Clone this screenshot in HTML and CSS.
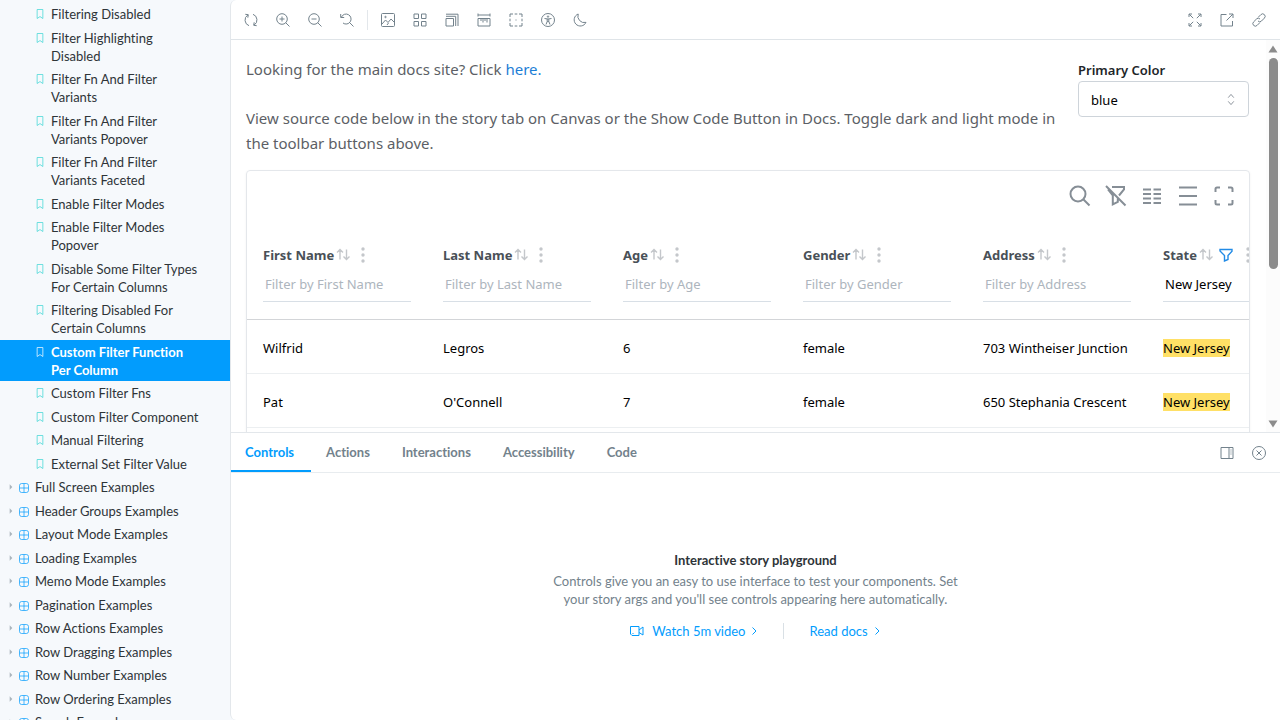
FILE: index.html
```html
<!DOCTYPE html>
<html lang="en">
<head>
<meta charset="utf-8">
<title>Custom Filter Function Per Column - Storybook</title>
<link rel="stylesheet" href="styles.css">
</head>
<body>
<svg class="defs" aria-hidden="true">
  <symbol id="bookmark" viewBox="0 0 14 14"><path d="M3 .7h8v12.600L7 10.600 3 13.300z"/></symbol>
  <symbol id="component" viewBox="0 0 14 14"><rect x=".7" y=".7" width="12.600" height="12.600" rx="3"/><path d="M7 1v12M1 7h12"/></symbol>
  <symbol id="caret" viewBox="0 0 6 8"><path d="M1 0l4 4-4 4z"/></symbol>
  <symbol id="sort" viewBox="0 0 14 14"><path d="M4 11.500V1.500M1 4.500l3-3 3 3M10.500 1.500v10M7.500 8.500l3 3 3-3" stroke-width="1.400"/></symbol>
  <symbol id="dots" viewBox="0 0 4 16"><circle cx="2" cy="2" r="1.700"/><circle cx="2" cy="8" r="1.700"/><circle cx="2" cy="14" r="1.700"/></symbol>
  <symbol id="chevron" viewBox="0 0 8 8"><path d="M2.500 .5L6 4 2.500 7.500"/></symbol>
</svg>
<div class="app">
  <nav class="sidebar" aria-label="Stories">
    <ul class="tree">
      <li><a class="story" href="#"><svg><use href="#bookmark"/></svg><span>Filtering Disabled</span></a></li>
      <li><a class="story" href="#"><svg><use href="#bookmark"/></svg><span>Filter Highlighting Disabled</span></a></li>
      <li><a class="story" href="#"><svg><use href="#bookmark"/></svg><span>Filter Fn And Filter Variants</span></a></li>
      <li><a class="story" href="#"><svg><use href="#bookmark"/></svg><span>Filter Fn And Filter Variants Popover</span></a></li>
      <li><a class="story" href="#"><svg><use href="#bookmark"/></svg><span>Filter Fn And Filter Variants Faceted</span></a></li>
      <li><a class="story" href="#"><svg><use href="#bookmark"/></svg><span>Enable Filter Modes</span></a></li>
      <li><a class="story" href="#"><svg><use href="#bookmark"/></svg><span>Enable Filter Modes Popover</span></a></li>
      <li><a class="story" href="#"><svg><use href="#bookmark"/></svg><span>Disable Some Filter Types For Certain Columns</span></a></li>
      <li><a class="story" href="#"><svg><use href="#bookmark"/></svg><span>Filtering Disabled For Certain Columns</span></a></li>
      <li><a class="story selected" href="#" aria-current="page"><svg><use href="#bookmark"/></svg><span>Custom Filter Function Per Column</span></a></li>
      <li><a class="story" href="#"><svg><use href="#bookmark"/></svg><span>Custom Filter Fns</span></a></li>
      <li><a class="story" href="#"><svg><use href="#bookmark"/></svg><span>Custom Filter Component</span></a></li>
      <li><a class="story" href="#"><svg><use href="#bookmark"/></svg><span>Manual Filtering</span></a></li>
      <li><a class="story" href="#"><svg><use href="#bookmark"/></svg><span>External Set Filter Value</span></a></li>
      <li><button class="group"><svg class="caret"><use href="#caret"/></svg><svg class="comp"><use href="#component"/></svg><span>Full Screen Examples</span></button></li>
      <li><button class="group"><svg class="caret"><use href="#caret"/></svg><svg class="comp"><use href="#component"/></svg><span>Header Groups Examples</span></button></li>
      <li><button class="group"><svg class="caret"><use href="#caret"/></svg><svg class="comp"><use href="#component"/></svg><span>Layout Mode Examples</span></button></li>
      <li><button class="group"><svg class="caret"><use href="#caret"/></svg><svg class="comp"><use href="#component"/></svg><span>Loading Examples</span></button></li>
      <li><button class="group"><svg class="caret"><use href="#caret"/></svg><svg class="comp"><use href="#component"/></svg><span>Memo Mode Examples</span></button></li>
      <li><button class="group"><svg class="caret"><use href="#caret"/></svg><svg class="comp"><use href="#component"/></svg><span>Pagination Examples</span></button></li>
      <li><button class="group"><svg class="caret"><use href="#caret"/></svg><svg class="comp"><use href="#component"/></svg><span>Row Actions Examples</span></button></li>
      <li><button class="group"><svg class="caret"><use href="#caret"/></svg><svg class="comp"><use href="#component"/></svg><span>Row Dragging Examples</span></button></li>
      <li><button class="group"><svg class="caret"><use href="#caret"/></svg><svg class="comp"><use href="#component"/></svg><span>Row Number Examples</span></button></li>
      <li><button class="group"><svg class="caret"><use href="#caret"/></svg><svg class="comp"><use href="#component"/></svg><span>Row Ordering Examples</span></button></li>
      <li><button class="group"><svg class="caret"><use href="#caret"/></svg><svg class="comp"><use href="#component"/></svg><span>Search Examples</span></button></li>
    </ul>
  </nav>

  <main class="main">
    <div class="toolbar">
      <button aria-label="Remount component"><svg viewBox="0 0 14 14"><path d="M5 12.700A6 6 0 0 1 3.800 2M1.300 1.300l3 .4-.5 3M9 1.300A6 6 0 0 1 10.200 12M12.700 12.700l-3-.4.5-3"/></svg></button>
      <button aria-label="Zoom in"><svg viewBox="0 0 14 14"><circle cx="6" cy="6" r="5.300"/><path d="M9.700 9.700l3.800 3.800M6 3.500v5M3.500 6h5"/></svg></button>
      <button aria-label="Zoom out"><svg viewBox="0 0 14 14"><circle cx="6" cy="6" r="5.300"/><path d="M9.700 9.700l3.800 3.800M3.500 6h5"/></svg></button>
      <button aria-label="Reset zoom"><svg viewBox="0 0 14 14"><path d="M1.500 4A5 5 0 1 1 3 10M.7 1v3.500h3.500M9.700 9.700l3.800 3.800"/></svg></button>
      <span class="sep"></span>
      <button aria-label="Change background"><svg viewBox="0 0 14 14"><rect x=".5" y=".5" width="13" height="13" rx="1"/><circle cx="4.500" cy="4" r=".7"/><path d="M1 11l3.500-4L7 9.500 10 6l3.500 3.500M6 12l1.500-2"/></svg></button>
      <button aria-label="Apply grid"><svg viewBox="0 0 14 14"><path d="M1 1h4.500v4.500H1zM8.500 1H13v4.500H8.500zM1 8.500h4.500V13H1zM8.500 8.500H13V13H8.500z"/></svg></button>
      <button aria-label="Change viewport"><svg viewBox="0 0 14 14"><path d="M1 5.500h7.500V13H1zM1 3.300h9.700V13M1 1.200h12V13"/></svg></button>
      <button aria-label="Enable measure"><svg viewBox="0 0 14 14"><path d="M1 2h12M1 .5v3M13 .5v3M1 5.500h12v7.500H1zM4 5.500v2.500M6 5.500v4M8 5.500v2.500M10 5.500v4"/></svg></button>
      <button aria-label="Apply outlines"><svg viewBox="0 0 14 14"><path d="M1 4V1h3M10 1h3v3M13 10v3h-3M4 13H1v-3M5.700 1h2.600M5.700 13h2.600M1 5.700v2.600M13 5.700v2.600M6.500 7h1"/></svg></button>
      <button aria-label="Vision simulator"><svg viewBox="0 0 14 14"><circle cx="7" cy="7" r="6.500"/><circle cx="7" cy="3.600" r=".7"/><path d="M3.500 5.500L7 6l3.500-.5M6.200 6v2.500L5 11.500M7.800 6v2.500L9 11.500M6.200 8.500h1.600"/></svg></button>
      <button aria-label="Dark mode"><svg viewBox="0 0 14 14"><path d="M5.200 1A6.200 6.200 0 1 0 13 9.400 6.500 6.500 0 0 1 5.200 1z"/></svg></button>
      <span class="spring"></span>
      <button aria-label="Go full screen"><svg viewBox="0 0 14 14"><path d="M1 4V1h3M10 1h3v3M13 10v3h-3M4 13H1v-3M1.200 1.200l4 4M12.800 1.200l-4 4M12.800 12.800l-4-4M1.200 12.800l4-4"/></svg></button>
      <button aria-label="Open canvas in new tab"><svg viewBox="0 0 14 14"><path d="M6.500 1.500H1v11.500h11.500V8M9 1h4v4M13 1L6.500 7.500"/></svg></button>
      <button aria-label="Copy canvas link"><svg viewBox="0 0 14 14"><path d="M6.200 4.300l2.700-2.700a2.400 2.400 0 0 1 3.500 3.500L9.500 8a2.400 2.400 0 0 1-3.500 0M7.800 9.700l-2.700 2.700a2.400 2.400 0 0 1-3.500-3.500L4.500 6a2.400 2.400 0 0 1 3.500 0"/></svg></button>
    </div>

    <section class="canvas">
      <div class="preview">
        <div class="intro">
          <div class="copy">
            <p>Looking for the main docs site? Click <a href="#">here.</a></p>
            <p>View source code below in the story tab on Canvas or the Show Code Button in Docs. Toggle dark and light mode in the toolbar buttons above.</p>
          </div>
          <div class="field">
            <label for="color">Primary Color</label>
            <div class="select">
              <select id="color"><option>blue</option></select>
              <svg viewBox="0 0 8 14"><path d="M1 5l3-3.500L7 5M1 9l3 3.500L7 9"/></svg>
            </div>
          </div>
        </div>
        <div class="card">
          <div class="card-tools">
            <button aria-label="Show search"><svg viewBox="0 0 22 22"><circle cx="9" cy="9" r="7.500"/><path d="M14.500 14.500L20.500 20.500"/></svg></button>
            <button aria-label="Hide filters"><svg viewBox="0 0 22 22"><path d="M1 1l19.500 19.500M7 2h12v2.500L14 10.500M12.800 12.800V17l-5 2.500V10.500L3 4.500"/></svg></button>
            <button aria-label="Show columns"><svg viewBox="0 0 22 22"><path d="M2 4.500h8M2 9h8M2 13.500h8M2 18h8M12.500 4.500H20M12.500 9H20M12.500 13.500H20M12.500 18H20"/></svg></button>
            <button aria-label="Toggle density"><svg viewBox="0 0 22 22"><path d="M2 2.500h18M2 11h18M2 19.500h18"/></svg></button>
            <button aria-label="Toggle full screen"><svg viewBox="0 0 22 22"><path d="M2.500 7V4a1.500 1.500 0 0 1 1.500-1.500h3M15 2.500h3A1.500 1.500 0 0 1 19.500 4v3M19.500 15v3a1.500 1.500 0 0 1-1.500 1.500h-3M7 19.500H4A1.500 1.500 0 0 1 2.500 18v-3"/></svg></button>
          </div>
          <div class="table-wrap">
            <table>
              <thead><tr>
                <th><div class="head">First Name<svg class="sort"><use href="#sort"/></svg><svg class="dots"><use href="#dots"/></svg></div><input aria-label="Filter by First Name" placeholder="Filter by First Name"></th>
                <th><div class="head">Last Name<svg class="sort"><use href="#sort"/></svg><svg class="dots"><use href="#dots"/></svg></div><input aria-label="Filter by Last Name" placeholder="Filter by Last Name"></th>
                <th><div class="head">Age<svg class="sort"><use href="#sort"/></svg><svg class="dots"><use href="#dots"/></svg></div><input aria-label="Filter by Age" placeholder="Filter by Age"></th>
                <th><div class="head">Gender<svg class="sort"><use href="#sort"/></svg><svg class="dots"><use href="#dots"/></svg></div><input aria-label="Filter by Gender" placeholder="Filter by Gender"></th>
                <th><div class="head">Address<svg class="sort"><use href="#sort"/></svg><svg class="dots"><use href="#dots"/></svg></div><input aria-label="Filter by Address" placeholder="Filter by Address"></th>
                <th><div class="head">State<svg class="sort"><use href="#sort"/></svg><svg class="funnel" viewBox="0 0 14 14"><path d="M1 1.500h12v1.700L9 7.500v4L5.500 13V7.500L1 3z" stroke-width="1.400"/></svg><svg class="dots"><use href="#dots"/></svg></div><input aria-label="Filter by State" value="New Jersey"></th>
              </tr></thead>
              <tbody>
                <tr><td>Wilfrid</td><td>Legros</td><td>6</td><td>female</td><td>703 Wintheiser Junction</td><td><mark>New Jersey</mark></td></tr>
                <tr><td>Pat</td><td>O'Connell</td><td>7</td><td>female</td><td>650 Stephania Crescent</td><td><mark>New Jersey</mark></td></tr>
                <tr><td></td><td></td><td></td><td></td><td></td><td></td></tr>
              </tbody>
            </table>
          </div>
        </div>
      </div>
      <div class="scrollbar" aria-hidden="true">
        <svg viewBox="0 0 10 8"><path d="M5 0.500L9.500 7.500H.5z"/></svg>
        <div class="track"><div class="thumb"></div></div>
        <svg viewBox="0 0 10 8"><path d="M.5 .5h9L5 7.500z"/></svg>
      </div>
    </section>

    <section class="panel">
      <div class="tabs">
        <button class="tab active">Controls</button>
        <button class="tab">Actions</button>
        <button class="tab">Interactions</button>
        <button class="tab">Accessibility</button>
        <button class="tab">Code</button>
        <span class="spring"></span>
        <button class="icon" aria-label="Change addon orientation"><svg viewBox="0 0 14 14"><path d="M1 1.500h12v11H1zM9 1.500v11M10.500 4h1M10.500 6h1M10.500 8h1"/></svg></button>
        <button class="icon" aria-label="Hide addons"><svg viewBox="0 0 14 14"><circle cx="7" cy="7" r="6.500"/><path d="M4.500 4.500l5 5M9.500 4.500l-5 5"/></svg></button>
      </div>
      <div class="empty">
        <h2>Interactive story playground</h2>
        <p>Controls give you an easy to use interface to test your components. Set your story args and you'll see controls appearing here automatically.</p>
        <div class="links">
          <a href="#"><svg class="video" viewBox="0 0 14 14"><path d="M.5 2.500h8.500v9H2L.5 10zM9 6l4-3v8L9 8.500M2.500 9.500h1"/></svg>Watch 5m video<svg class="chev"><use href="#chevron"/></svg></a>
          <span class="divider"></span>
          <a href="#">Read docs<svg class="chev"><use href="#chevron"/></svg></a>
        </div>
      </div>
    </section>
  </main>
</div>
</body>
</html>
```
FILE: styles.css
```css
* { box-sizing: border-box; }
html, body { height: 100%; margin: 0; }
body { font: 13px/18px Lato, sans-serif; font-variant-ligatures: none; color: #2e3438; background: #f6f9fc; overflow: hidden; }
svg { display: block; flex: none; fill: none; stroke: currentColor; }
button { display: flex; align-items: center; padding: 0; border: 0; background: none; font: inherit; font-variant-ligatures: none; color: inherit; }
a { color: inherit; text-decoration: none; }
.defs { position: absolute; width: 0; height: 0; }
.app { display: grid; grid-template-columns: 230px 1fr; height: 100vh; }
.spring { flex: 1; }

/* Sidebar */
.sidebar { overflow: hidden; height: 100vh; }
.tree { display: flex; flex-direction: column; justify-content: space-between; height: calc(100% + 13px); margin: 0; padding: 2px 0 0; list-style: none; }
.story { display: flex; gap: 6px; padding: 3px 27px 2px 35px; }
.story svg { width: 10px; height: 10px; margin-top: 4px; color: #37d5d3; }
.selected { background: #029cfd; color: #fff; font-weight: 700; }
.selected svg { color: #fff; }
.group { gap: 6px; width: 100%; padding: 3px 0 2px 9px; text-align: left; }
.group .caret { width: 4px; height: 6px; fill: #a9b4bc; stroke: none; }
.group .comp { width: 10px; height: 10px; margin-top: 2px; color: #029cfd; }

/* Main column */
.main { display: grid; grid-template-rows: 40px 1fr 288px; min-width: 0; height: 100vh; background: #fff; border-left: 1px solid #e3e7eb; border-radius: 6px 0 0 6px; overflow: hidden; }
.toolbar { display: flex; align-items: center; padding: 0 7px 0 6px; gap: 4px; border-bottom: 1px solid #dfe4e8; color: #73828c; }
.toolbar button, .icon { justify-content: center; width: 28px; height: 28px; }
.toolbar svg, .icon svg { width: 14px; height: 14px; }
.sep { width: 1px; height: 20px; margin: 0 2px; background: #e3e7eb; }

/* Story preview */
.canvas { display: flex; min-height: 0; overflow: hidden; font-family: "Noto Sans", sans-serif; }
.preview { flex: 1; min-width: 0; padding: 17px 16px 0 15px; }
.intro { display: flex; gap: 8px; margin-bottom: 14px; padding-right: 1px; }
.copy { flex: 1; color: #5c5f66; font-size: 15px; line-height: 25px; }
.copy p { margin: 0 0 24px; }
.copy p:last-child { margin: 0; }
.copy a { color: #1c7ed6; }
.field { width: 171px; padding-top: 4px; }
.field label { display: block; height: 20px; color: #212529; font-weight: 600; }
.select { display: flex; align-items: center; height: 36px; padding-right: 13px; border: 1px solid #ced4da; border-radius: 4px; }
.select select { flex: 1; height: 34px; padding: 2px 0 0 12px; border: 0; background: none; appearance: none; font: inherit; color: #000; }
.select svg { width: 8px; height: 13px; color: #868e96; }
.card { border: 1px solid #e4e7eb; border-radius: 4px; box-shadow: 0 1px 3px #0000000d; overflow: hidden; }
.card-tools { display: flex; justify-content: flex-end; align-items: center; gap: 8px; height: 50px; padding: 0 11px; color: #868e96; }
.card-tools button { justify-content: center; width: 28px; height: 28px; }
.card-tools svg { width: 22px; height: 22px; stroke-width: 2; }
.table-wrap { overflow: hidden; }
table { width: 1080px; table-layout: fixed; border-collapse: separate; border-spacing: 0; text-align: left; }
th { padding: 24px 16px 17px; color: #495057; font-weight: 700; border-bottom: 1px solid #d3d5d8; }
.head { display: flex; align-items: center; height: 20px; white-space: nowrap; }
.sort { width: 14px; height: 14px; margin: 0 11px 0 2px; color: #c4c7cb; }
.dots { width: 4px; height: 16px; fill: #c4c7cb; stroke: none; }
.funnel { width: 14px; height: 14px; margin: 0 13px 0 -5px; color: #228be6; }
th input { display: block; width: 100%; height: 37px; padding: 2px 2px 0; border: 0; border-bottom: 1px solid #d8dfe6; background: none; font: inherit; font-weight: 400; color: #000; }
th input::placeholder { color: #adb5bd; opacity: 1; }
td { height: 54px; padding: 3px 16px 0; border-bottom: 1px solid #eceff1; color: #000; white-space: nowrap; }
mark { background: #ffe066; color: inherit; }

.scrollbar { display: flex; flex-direction: column; align-items: center; gap: 5px; width: 14px; padding: 5px 0 4px; background: #fcfcfc; }
.scrollbar svg { width: 10px; height: 8px; fill: #8b8b8b; stroke: none; }
.track { flex: 1; }
.thumb { width: 9px; height: 59%; border-radius: 5px; background: #8b8b8b; }

/* Addon panel */
.panel { display: flex; flex-direction: column; border-top: 1px solid #e3e7eb; }
.tabs { display: flex; align-items: stretch; height: 40px; padding-right: 7px; gap: 1px; border-bottom: 1px solid #e8ecef; color: #73828c; }
.tab { padding: 0 17px 0 14px; border-bottom: 2px solid transparent; font-weight: 700; }
.active { color: #029cfd; border-bottom-color: #029cfd; }
.icon { align-self: center; }
.icon + .icon { margin-left: 3px; }
.empty { flex: 1; display: flex; flex-direction: column; align-items: center; justify-content: center; padding-bottom: 2px; text-align: center; }
.empty h2 { margin: 0 0 3px; font-size: 13px; line-height: 18px; font-weight: 700; }
.empty p { max-width: 415px; margin: 0 0 14px; color: #73828c; }
.links { display: flex; align-items: center; gap: 25px; color: #029cfd; }
.links a { display: flex; align-items: center; }
.video { width: 14px; height: 14px; margin-right: 8px; }
.chev { width: 8px; height: 8px; margin-left: 5px; }
.divider { width: 1px; height: 16px; background: #d9e0e5; }
```
